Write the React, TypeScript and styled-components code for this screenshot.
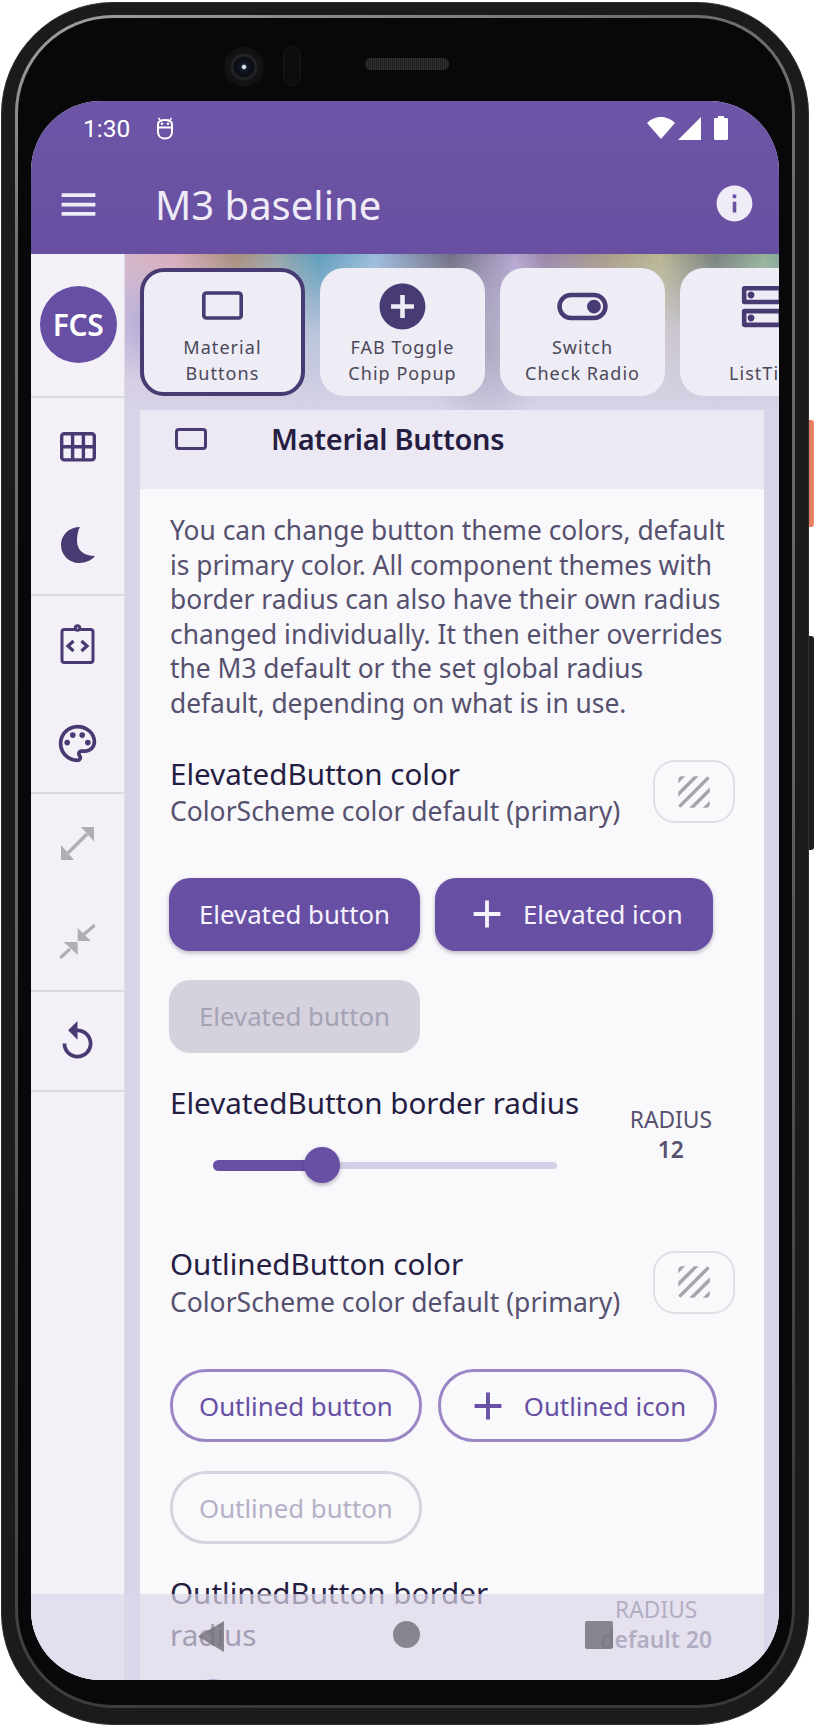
import React from "react";
import styled, { createGlobalStyle } from "styled-components";

const GlobalStyle = createGlobalStyle`
  html, body { margin: 0; padding: 0; background: #fff; }
  body { font-family: "Noto Sans", "Liberation Sans", sans-serif; }
  * { box-sizing: border-box; }
`;

const ink = "#483a72";
const primary = "#6750a4";

const Stage = styled.div`
  position: relative;
  width: 815px;
  height: 1727px;
  padding: 2px 6px 2px 1px;
  overflow: hidden;
  background: #fff;
`;

const SideKey = styled.div<{ $top: number; $height: number; $color: string }>`
  position: absolute;
  right: 1px;
  top: ${(p) => p.$top}px;
  width: 8px;
  height: ${(p) => p.$height}px;
  border-radius: 0 3px 3px 0;
  background: ${(p) => p.$color};
`;

const Shell = styled.div`
  position: relative;
  height: 100%;
  padding: 13px 14px 15px;
  border: 1px solid #303032;
  border-radius: 112px;
  background: #1b1b1d;
`;

const Ring = styled.div`
  height: 100%;
  padding: 3px;
  margin: -1px;
  border-radius: 98px;
  background: linear-gradient(160deg, #a2a3a5, #6e6f71 12%, #626365 50%, #3a3a3c 90%);
`;

const Bezel = styled.div`
  position: relative;
  height: 100%;
  padding: 83px 13px 28px 13px;
  border-radius: 95px;
  background: #08080a;
`;

const Lens = styled.div`
  position: absolute;
  left: 206px;
  top: 29px;
  width: 40px;
  height: 40px;
  border-radius: 50%;
  background: radial-gradient(circle at 50% 50%, #dfe3ee 0 1.5px, #141a2a 3px, #0b0c12 9px, #26272a 12px, #141416 14px, #111113 20px);
`;

const Sensor = styled.div`
  position: absolute;
  left: 265px;
  top: 28px;
  width: 18px;
  height: 40px;
  border: 1px solid #17171a;
  border-radius: 9px;
  background: #0d0d0f;
`;

const Speaker = styled.div`
  position: absolute;
  left: 347px;
  top: 40px;
  width: 84px;
  height: 12px;
  border-radius: 6px;
  border: 1px solid #2c2c2f;
  background: repeating-linear-gradient(90deg, #1e1e20 0 1px, #303033 1px 2px);
`;

const Screen = styled.div`
  position: relative;
  display: flex;
  flex-direction: column;
  height: 1579px;
  border-radius: 70px;
  overflow: hidden;
  background: #f3f0f8;
`;

const AppBar = styled.header`
  flex: none;
  height: 153px;
  background: linear-gradient(180deg, #6d56a7, #684fa1);
  color: #fff;
`;

const StatusRow = styled.div`
  display: flex;
  align-items: center;
  height: 54px;
  padding: 0 51px 0 52px;
`;

const Clock = styled.span`
  font-family: Roboto, sans-serif;
  font-size: 24.5px;
  margin-right: 26px;
`;

const StatusIcons = styled.div`
  display: flex;
  align-items: center;
  gap: 3px;
  margin-left: auto;
`;

const BatteryIcon = styled.svg`
  margin-left: 9px;
`;

const Toolbar = styled.div`
  display: flex;
  align-items: center;
  height: 99px;
  padding: 0 23px 0 25px;
  color: #efebf7;
`;

const ToolbarTitle = styled.h1`
  flex: 1;
  margin: 0 0 0 54px;
  font-size: 40px;
  font-weight: 400;
  line-height: 50px;
`;

const InfoSlot = styled.span`
  display: flex;
  margin-top: -2px;
`;

const Body = styled.div`
  flex: 1;
  display: flex;
  min-height: 0;
`;

const Rail = styled.nav`
  flex: none;
  width: 94px;
  border-right: 1px solid #dedbe6;
  background: #f3f0f8;
`;

const RailGroup = styled.div`
  border-bottom: 2px solid #dcd9e2;
`;

const AvatarSlot = styled(RailGroup)`
  display: flex;
  justify-content: center;
  height: 144px;
  padding-top: 32px;
`;

const Avatar = styled.div`
  display: flex;
  align-items: center;
  justify-content: center;
  width: 77px;
  height: 77px;
  margin-left: 1px;
  border-radius: 50%;
  background: ${primary};
  color: #fff;
  font-size: 30px;
  font-weight: 600;
  letter-spacing: -0.5px;
`;

const RailItem = styled.div<{ $muted?: boolean }>`
  display: flex;
  align-items: center;
  justify-content: center;
  height: 98px;
  color: ${(p) => (p.$muted ? "#b0aeb4" : ink)};
`;

const Main = styled.main`
  flex: 1;
  min-width: 0;
  display: flex;
  flex-direction: column;
  background: #d9d4e8;
`;

const TabStrip = styled.div`
  flex: none;
  display: flex;
  gap: 15px;
  height: 156px;
  padding: 14px 0 14px 15px;
  overflow: hidden;
  background:
    radial-gradient(60px 90px at 362px 92px, rgba(150, 145, 175, 0.55), transparent),
    radial-gradient(50px 60px at 20px 70px, rgba(170, 160, 215, 0.7), transparent),
    linear-gradient(180deg, transparent 0, rgba(214, 208, 230, 0.75) 50%, #d7d2e6 100%),
    linear-gradient(90deg, #d4b6c8 0, #d6adbd 50px, #a98e7c 110px, #9aa5a8 150px, #5e9fbc 195px, #9bbbdc 250px, #716f84 325px, #b5a6d0 390px, #9a87aa 420px, #a99b88 480px, #b9b792 535px, #79827e 590px, #93b398 640px, #5f8795 690px, #b8b5da 750px);
`;

const TabCard = styled.div<{ $selected?: boolean }>`
  flex: none;
  display: flex;
  flex-direction: column;
  align-items: center;
  width: 165px;
  height: 128px;
  padding-top: ${(p) => (p.$selected ? 7 : 11)}px;
  border: ${(p) => (p.$selected ? `4px solid ${ink}` : "none")};
  border-radius: 24px;
  background: #eeecf5;
  color: ${ink};
`;

const TabIcon = styled.div`
  display: flex;
  height: 55px;
`;

const TabLabel = styled.div`
  margin-top: 1px;
  color: #4b4859;
  font-size: 18px;
  line-height: 25.5px;
  letter-spacing: 1.05px;
  text-align: center;
  white-space: pre-line;
`;

const Card = styled.section`
  flex: 1;
  min-height: 0;
  margin: 0 15px;
  background: #f9f8fb;
`;

const CardHeader = styled.div`
  display: flex;
  height: 79px;
  padding: 8px 0 0 35px;
  background: #ece9f4;
  color: ${ink};
`;

const RectIconSlot = styled.div`
  display: flex;
  height: 22px;
  margin-top: 10px;
`;

const CardTitle = styled.h2`
  margin: 0 0 0 64px;
  color: #251d42;
  font-size: 29px;
  font-weight: 600;
  line-height: 41px;
  letter-spacing: -0.3px;
`;

const CardBody = styled.div`
  padding: 24px 30px 0;
`;

const Description = styled.p`
  margin: 0 0 32px;
  color: #55516e;
  font-size: 26.35px;
  line-height: 34.6px;
`;

const ColorRow = styled.div<{ $top?: number }>`
  display: flex;
  align-items: center;
  justify-content: space-between;
  margin-top: ${(p) => p.$top ?? 0}px;
`;

const RowTitle = styled.div`
  color: #251d42;
  font-size: 29.6px;
  line-height: 41.5px;
`;

const RowSubtitle = styled.div`
  color: #55516e;
  font-size: 26.5px;
  line-height: 34.6px;
  white-space: nowrap;
`;

const ColorBox = styled.div`
  display: flex;
  align-items: center;
  justify-content: center;
  width: 82px;
  height: 63px;
  margin: 2px -1px 0 0;
  border: 2px solid #e0dfe4;
  border-radius: 22px;
  color: #a6a4aa;
`;

const ButtonGrid = styled.div<{ $top: number }>`
  display: flex;
  flex-wrap: wrap;
  gap: 29px 15px;
  width: 560px;
  margin: ${(p) => p.$top}px 0 0 -1px;
`;

const BaseButton = styled.div`
  display: flex;
  align-items: center;
  height: 73px;
  font-size: 25.8px;
  font-weight: 400;
  white-space: nowrap;
`;

const ElevatedButton = styled(BaseButton)<{ $disabled?: boolean; $icon?: boolean }>`
  padding: 0 ${(p) => (p.$icon ? "30px 0 29px" : "30px")};
  border-radius: 21px;
  background: ${(p) => (p.$disabled ? "#d5d2de" : primary)};
  color: ${(p) => (p.$disabled ? "#a6a2b5" : "#f6f3fb")};
  box-shadow: ${(p) => (p.$disabled ? "none" : "0 2px 4px rgba(40, 30, 70, 0.3)")};
`;

const OutlinedButton = styled(BaseButton)<{ $disabled?: boolean; $icon?: boolean }>`
  padding: 0 ${(p) => (p.$icon ? "28px 0 24px" : "26px")};
  margin-left: 1px;
  border: 3px solid ${(p) => (p.$disabled ? "#d6d3df" : "#9a86c4")};
  border-radius: 36px;
  color: ${(p) => (p.$disabled ? "#b5b1c6" : primary)};
`;

const ButtonIcon = styled.span`
  display: flex;
  margin-right: 13px;
`;

const SliderRow = styled.div<{ $top: number }>`
  display: flex;
  justify-content: space-between;
  margin: ${(p) => p.$top}px 22px 0 0;
`;

const SliderColumn = styled.div<{ $narrow?: boolean }>`
  width: ${(p) => (p.$narrow ? 400 : 433)}px;
`;

const SliderTrack = styled.div`
  position: relative;
  height: 7px;
  margin: 39px 46px 38px 43px;
  border-radius: 4px;
  background: #d4cfe6;
`;

const SliderFill = styled.div`
  position: absolute;
  left: 0;
  top: -2px;
  height: 11px;
  border-radius: 6px 0 0 6px;
  background: ${primary};
`;

const SliderThumb = styled.div`
  position: absolute;
  top: -15px;
  width: 36px;
  height: 36px;
  margin-left: -18px;
  border-radius: 50%;
  background: ${primary};
  box-shadow: 0 2px 4px rgba(40, 30, 70, 0.35);
`;

const RadiusValue = styled.div`
  padding-top: 23px;
  text-align: center;
  color: #55516e;
  font-size: 22.8px;
  line-height: 30px;
  white-space: nowrap;
`;

const RadiusNumber = styled.div`
  font-weight: 600;
`;

const NavBar = styled.div`
  position: absolute;
  left: 0;
  right: 0;
  bottom: 0;
  height: 86px;
  background: rgba(220, 214, 233, 0.69);
`;

const NavSlot = styled.div`
  position: absolute;
  top: 27px;
  display: flex;
  color: rgba(112, 110, 118, 0.8);
`;

const BackSlot = styled(NavSlot)`
  left: 167px;
`;
const HomeSlot = styled(NavSlot)`
  left: 362px;
`;
const RecentSlot = styled(NavSlot)`
  left: 554px;
`;

const Svg = ({ size, children }: { size: number; children: React.ReactNode }) => (
  <svg width={size} height={size} viewBox="0 0 24 24" fill="currentColor">
    {children}
  </svg>
);

const RectIcon = ({ w, h, stroke }: { w: number; h: number; stroke: number }) => (
  <svg width={w} height={h} viewBox={`0 0 ${w} ${h}`} fill="none" stroke="currentColor" strokeWidth={stroke}>
    <rect x={stroke / 2} y={stroke / 2} width={w - stroke} height={h - stroke} rx={stroke * 0.8} />
  </svg>
);

const TableIcon = () => (
  <svg width={36} height={30} viewBox="0 0 36 30" fill="none" stroke="currentColor" strokeWidth={3.4}>
    <rect x="1.7" y="1.7" width="32.6" height="26.2" rx="2.5" />
    <path d="M12.6 1.7v26.2M23.4 1.7v26.2M1.7 14.8h32.6" />
  </svg>
);

const MoonIcon = () => (
  <svg width={34} height={36} viewBox="0 0 34 36" fill="currentColor">
    <path d="M19 0C8 0 0 8 0 18c0 10 8 18 18 18 7 0 13-3 16-7-10 0-18-5-18-15 0-6 1-11 3-14z" />
  </svg>
);

const CodeBoardIcon = () => (
  <svg width={45} height={45} viewBox="0 0 45 45" fill="none" stroke="currentColor" strokeWidth={3}>
    <rect x="7" y="6.5" width="31" height="33" rx="2.5" />
    <circle cx="22.5" cy="5" r="2.2" fill="#f3f0f8" />
    <path d="M18.5 18l-5.5 5 5.5 5M26.5 18l5.5 5-5.5 5" strokeWidth={3.2} />
  </svg>
);

const ExpandIcon = () => (
  <svg width={33} height={33} viewBox="0 0 33 33" fill="currentColor">
    <path d="M20 0h13v14.500zM0 33v-15l13 15z" />
    <path d="M7 26L26 7" stroke="currentColor" strokeWidth={3.6} fill="none" />
  </svg>
);

const CompressIcon = () => (
  <svg width={35} height={35} viewBox="0 0 35 35" fill="currentColor">
    <path d="M17.700 4v13H31zM3.700 18h14v13z" />
    <path d="M35 1L23 11M0 34l10-9" stroke="currentColor" strokeWidth={3.2} fill="none" />
  </svg>
);

const TextureIcon = ({ size }: { size: number }) => (
  <Svg size={size}>
    <path d="M19.51 3.08L3.08 19.51c.09.34.27.65.51.9.25.24.56.42.9.51L20.93 4.49c-.19-.69-.73-1.23-1.42-1.41zM11.88 3L3 11.88v2.83L14.71 3h-2.83zM5 3c-1.1 0-2 .9-2 2v2l4-4H5zm14 18c.55 0 1.05-.22 1.41-.59.37-.36.59-.86.59-1.41v-2l-4 4h2zm-9.71 0h2.83L21 12.12V9.29L9.29 21z" />
  </Svg>
);

const PlusIcon = () => (
  <Svg size={46}>
    <path d="M19 13h-6v6h-2v-6H5v-2h6V5h2v6h6v2z" />
  </Svg>
);

const DebugBadge = () => (
  <svg width={18} height={23} viewBox="0 0 18 23" fill="none" stroke="#fff" strokeWidth={2}>
    <path d="M2 10V7.500C2 4.500 5 3 9 3s7 1.500 7 4.500V10M1 10.500h16M2 11v4c0 4 3 6.500 7 6.500s7-2.500 7-6.500v-4" />
    <path d="M4 3L2.500 1M14 3l1.500-2" strokeWidth={1.4} />
    <circle cx="6" cy="6.800" r="1.200" fill="#fff" stroke="none" />
    <circle cx="12" cy="6.800" r="1.200" fill="#fff" stroke="none" />
  </svg>
);

const tabs = [
  { label: "FAB Toggle\nChip Popup", path: "M12 2C6.48 2 2 6.48 2 12s4.48 10 10 10 10-4.48 10-10S17.52 2 12 2zm5 11h-4v4h-2v-4H7v-2h4V7h2v4h4v2z" },
  { label: "Switch\nCheck Radio", path: "M17 6H7c-3.31 0-6 2.69-6 6s2.69 6 6 6h10c3.31 0 6-2.69 6-6s-2.69-6-6-6zm0 10H7c-2.21 0-4-1.79-4-4s1.79-4 4-4h10c2.21 0 4 1.79 4 4s-1.79 4-4 4zm0-7c-1.66 0-3 1.34-3 3s1.34 3 3 3 3-1.34 3-3-1.34-3-3-3z" },
  { label: "\nListTile", path: "M19 15v4H5v-4h14m1-2H4c-.55 0-1 .45-1 1v6c0 .55.45 1 1 1h16c.55 0 1-.45 1-1v-6c0-.55-.45-1-1-1zM7 18.5c-.82 0-1.5-.67-1.5-1.5s.68-1.5 1.5-1.5 1.5.67 1.5 1.5-.67 1.5-1.5 1.5zM19 5v4H5V5h14m1-2H4c-.55 0-1 .45-1 1v6c0 .55.45 1 1 1h16c.55 0 1-.45 1-1V4c0-.55-.45-1-1-1zM7 8.5c-.82 0-1.5-.67-1.5-1.5S6.18 5.5 7 5.5s1.5.68 1.5 1.5S7.83 8.5 7 8.5z" },
];

const SettingSlider = ({ percent, narrow, title, label, value }: { percent: number; narrow?: boolean; title: string; label: string; value: string }) => (
  <>
    <SliderColumn $narrow={narrow}>
      <RowTitle>{title}</RowTitle>
      <SliderTrack>
        <SliderFill style={{ width: `${percent}%` }} />
        <SliderThumb style={{ left: `${percent}%` }} />
      </SliderTrack>
    </SliderColumn>
    <RadiusValue>
      {label}
      <RadiusNumber>{value}</RadiusNumber>
    </RadiusValue>
  </>
);

const App: React.FC = () => (
  <Stage>
    <GlobalStyle />
    <SideKey $top={420} $height={107} $color="linear-gradient(90deg, #d9694e, #ee8a6c)" />
    <SideKey $top={636} $height={214} $color="#1d1d1f" />
    <Shell>
      <Ring>
        <Bezel>
          <Lens />
          <Sensor />
          <Speaker />
          <Screen>
            <AppBar>
              <StatusRow>
                <Clock>1:30</Clock>
                <DebugBadge />
                <StatusIcons>
                  <svg width={28} height={22} viewBox="0 0 28 22" fill="#fff">
                    <path d="M14 22L0 6C3.5 2.4 8.5 0 14 0s10.500 2.400 14 6z" />
                  </svg>
                  <svg width={24} height={23} viewBox="0 0 24 23" fill="#fff">
                    <path d="M23 0v23H0z" />
                  </svg>
                  <BatteryIcon width={14} height={24} viewBox="0 0 14 24" fill="#fff">
                    <path d="M4 2V0h6v2h2.500c.8 0 1.500.7 1.500 1.500v19c0 .8-.7 1.500-1.500 1.500h-11C.7 24 0 23.300 0 22.500v-19C0 2.700.7 2 1.500 2z" />
                  </BatteryIcon>
                </StatusIcons>
              </StatusRow>
              <Toolbar>
                <Svg size={45}>
                  <path d="M3 18h18v-2H3v2zm0-5h18v-2H3v2zm0-7v2h18V6H3z" />
                </Svg>
                <ToolbarTitle>M3 baseline</ToolbarTitle>
                <InfoSlot>
                  <Svg size={43}>
                    <path d="M12 2C6.480 2 2 6.480 2 12s4.480 10 10 10 10-4.480 10-10S17.520 2 12 2zm1 15h-2v-6h2v6zm0-8h-2V7h2v2z" />
                  </Svg>
                </InfoSlot>
              </Toolbar>
            </AppBar>
            <Body>
              <Rail>
                <AvatarSlot>
                  <Avatar>FCS</Avatar>
                </AvatarSlot>
                <RailGroup>
                  <RailItem>
                    <TableIcon />
                  </RailItem>
                  <RailItem>
                    <MoonIcon />
                  </RailItem>
                </RailGroup>
                <RailGroup>
                  <RailItem>
                    <CodeBoardIcon />
                  </RailItem>
                  <RailItem>
                    <Svg size={45}>
                      <path
                        fillRule="evenodd"
                        d="M12 2C6.490 2 2 6.490 2 12s4.490 10 10 10c1.380 0 2.500-1.120 2.500-2.500 0-.61-.23-1.200-.64-1.670-.08-.1-.13-.21-.13-.33 0-.28.22-.5.5-.5H16c3.310 0 6-2.690 6-6 0-4.960-4.490-9-10-9zm4 13h-1.770c-1.380 0-2.500 1.120-2.500 2.500 0 .61.22 1.190.63 1.650.06.07.14.19.14.35 0 .28-.22.5-.5.5-4.410 0-8-3.590-8-8s3.590-8 8-8 8 3.140 8 7c0 2.210-1.790 4-4 4z"
                      />
                      <circle cx="6.500" cy="11.500" r="1.500" />
                      <circle cx="9.500" cy="7.500" r="1.500" />
                      <circle cx="14.500" cy="7.500" r="1.500" />
                      <circle cx="17.500" cy="11.500" r="1.500" />
                    </Svg>
                  </RailItem>
                </RailGroup>
                <RailGroup>
                  <RailItem $muted>
                    <ExpandIcon />
                  </RailItem>
                  <RailItem $muted>
                    <CompressIcon />
                  </RailItem>
                </RailGroup>
                <RailGroup>
                  <RailItem>
                    <Svg size={45}>
                      <path d="M12 5V1L7 6l5 5V7c3.310 0 6 2.690 6 6s-2.690 6-6 6-6-2.690-6-6H4c0 4.420 3.580 8 8 8s8-3.580 8-8-3.580-8-8-8z" />
                    </Svg>
                  </RailItem>
                </RailGroup>
              </Rail>
              <Main>
                <TabStrip>
                  <TabCard $selected>
                    <TabIcon>
                      <svg width={41} height={55} viewBox="0 0 41 55" fill="none" stroke="currentColor" strokeWidth={3.6}>
                        <rect x="1.800" y="14" width="37.400" height="25" rx="2.500" />
                      </svg>
                    </TabIcon>
                    <TabLabel>{"Material\nButtons"}</TabLabel>
                  </TabCard>
                  {tabs.map((tab) => (
                    <TabCard key={tab.label}>
                      <TabIcon>
                        <Svg size={55}>
                          <path d={tab.path} />
                        </Svg>
                      </TabIcon>
                      <TabLabel>{tab.label}</TabLabel>
                    </TabCard>
                  ))}
                </TabStrip>
                <Card>
                  <CardHeader>
                    <RectIconSlot>
                      <RectIcon w={32} h={22} stroke={3} />
                    </RectIconSlot>
                    <CardTitle>Material Buttons</CardTitle>
                  </CardHeader>
                  <CardBody>
                    <Description>
                      You can change button theme colors, default is primary color. All component themes with border radius can also have their own radius changed individually. It then either overrides the M3 default or the set global radius default, depending on what is in use.
                    </Description>
                    <ColorRow>
                      <div>
                        <RowTitle>ElevatedButton color</RowTitle>
                        <RowSubtitle>ColorScheme color default (primary)</RowSubtitle>
                      </div>
                      <ColorBox>
                        <TextureIcon size={42} />
                      </ColorBox>
                    </ColorRow>
                    <ButtonGrid $top={49}>
                      <ElevatedButton>Elevated button</ElevatedButton>
                      <ElevatedButton $icon>
                        <ButtonIcon>
                          <PlusIcon />
                        </ButtonIcon>
                        Elevated icon
                      </ElevatedButton>
                      <ElevatedButton $disabled>Elevated button</ElevatedButton>
                    </ButtonGrid>
                    <SliderRow $top={29}>
                      <SettingSlider percent={31.6} title="ElevatedButton border radius" label="RADIUS" value="12" />
                    </SliderRow>
                    <ColorRow $top={36}>
                      <div>
                        <RowTitle>OutlinedButton color</RowTitle>
                        <RowSubtitle>ColorScheme color default (primary)</RowSubtitle>
                      </div>
                      <ColorBox>
                        <TextureIcon size={42} />
                      </ColorBox>
                    </ColorRow>
                    <ButtonGrid $top={50}>
                      <OutlinedButton>Outlined button</OutlinedButton>
                      <OutlinedButton $icon>
                        <ButtonIcon>
                          <PlusIcon />
                        </ButtonIcon>
                        Outlined icon
                      </OutlinedButton>
                      <OutlinedButton $disabled>Outlined button</OutlinedButton>
                    </ButtonGrid>
                    <SliderRow $top={28}>
                      <SettingSlider percent={0} narrow title="OutlinedButton border radius" label="RADIUS" value="default 20" />
                    </SliderRow>
                  </CardBody>
                </Card>
              </Main>
            </Body>
            <NavBar>
              <BackSlot>
                <svg width={26} height={31} viewBox="0 0 26 31" fill="currentColor">
                  <path d="M26 0v31L0 15.500z" />
                </svg>
              </BackSlot>
              <HomeSlot>
                <svg width={27} height={27} viewBox="0 0 27 27" fill="currentColor">
                  <circle cx="13.500" cy="13.500" r="13.500" />
                </svg>
              </HomeSlot>
              <RecentSlot>
                <svg width={28} height={28} viewBox="0 0 28 28" fill="currentColor">
                  <rect width="28" height="28" rx="2" />
                </svg>
              </RecentSlot>
            </NavBar>
          </Screen>
        </Bezel>
      </Ring>
    </Shell>
  </Stage>
);

export default App;
